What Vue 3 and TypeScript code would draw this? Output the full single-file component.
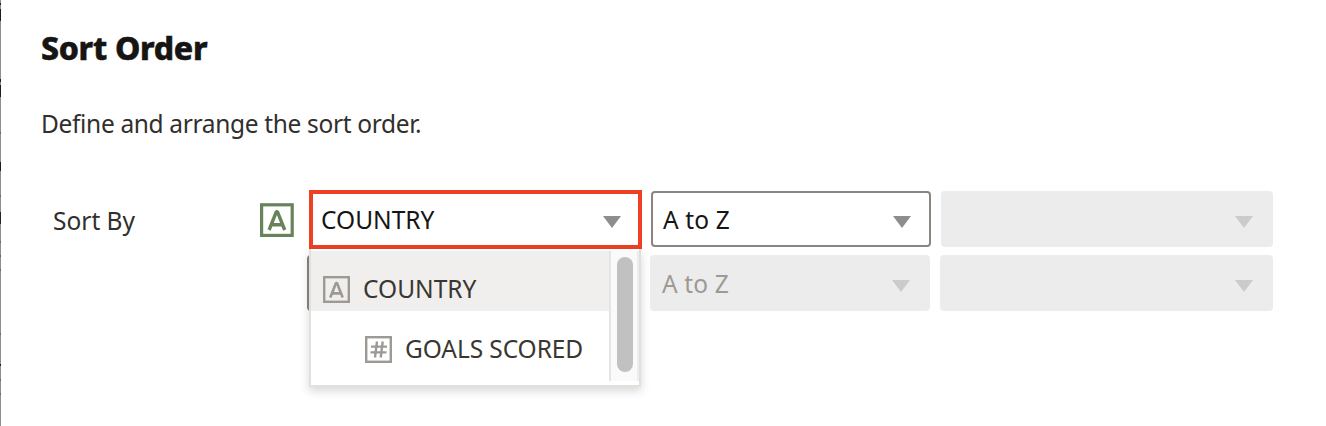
<script setup lang="ts">
interface Option { label: string; kind: 'text' | 'number' }
const options: Option[] = [
  { label: 'COUNTRY', kind: 'text' },
  { label: 'GOALS SCORED', kind: 'number' },
]
</script>

<template>
  <main class="dialog">
    <h1><span>Sort Order</span></h1>
    <p class="intro">Define and arrange the sort order.</p>
    <section class="row first">
      <label class="label">Sort By</label>
      <svg class="type" viewBox="0 0 34 34">
        <rect x="1.6" y="1.8" width="30.6" height="30.6" fill="#fff" stroke="#68825a" stroke-width="3.2" />
        <path d="M9.1 27 16.4 8.7H17.4L24.7 27M12 21.7H22" fill="none" stroke="#68825a" stroke-width="3.4" stroke-linejoin="bevel" />
      </svg>
      <div class="column">
        <span class="value country">COUNTRY</span>
        <svg class="arrow" viewBox="0 0 18 12"><path d="M0 0H18L9 12Z" /></svg>
        <div class="popup">
          <ul>
            <li v-for="(option, i) in options" :key="option.label" :class="{ active: i === 0, child: i === 1 }">
              <svg class="small" viewBox="0 0 27 27">
                <rect x="1.2" y="1.2" width="24.6" height="24.6" fill="none" stroke="#9d9994" stroke-width="2.4" />
                <path v-if="option.kind === 'text'" d="M7.3 21.5 13 7H14L19.7 21.5M9.4 17.4H17.6" fill="none" stroke="#9d9994" stroke-width="2.6" stroke-linejoin="bevel" />
                <path v-else d="M12 5.5 10 21.5M17.7 5.5 15.7 21.5M6 10.6H22M5.5 16.4H21.5" fill="none" stroke="#9d9994" stroke-width="2.4" />
              </svg>
              <span :class="option.kind">{{ option.label }}</span>
            </li>
          </ul>
          <div class="track"><div class="thumb"></div></div>
        </div>
      </div>
      <div class="select order"><span class="value atoz">A to Z</span><svg class="arrow" viewBox="0 0 18 12"><path d="M0 0H18L9 12Z" /></svg></div>
      <div class="select disabled end"><svg class="arrow" viewBox="0 0 18 12"><path d="M0 0H18L9 12Z" /></svg></div>
    </section>
    <section class="row second">
      <div class="select covered"></div>
      <div class="select order disabled"><span class="value atoz">A to Z</span><svg class="arrow" viewBox="0 0 18 12"><path d="M0 0H18L9 12Z" /></svg></div>
      <div class="select disabled end"><svg class="arrow" viewBox="0 0 18 12"><path d="M0 0H18L9 12Z" /></svg></div>
    </section>
  </main>
</template>

<style scoped>
* { box-sizing: border-box; }
.dialog {
  width: 1326px; height: 426px; overflow: hidden; padding-top: 28px;
  font-family: "Noto Sans", sans-serif; font-size: 24.5px; line-height: 40px; color: #312f2d;
  background:
    linear-gradient(#8e8e8e 0 3px, #222 3px 5px, #8e8e8e 5px 9px, #1c1c1c 9px 21px, #8e8e8e 21px 79px, #222 79px 82px, #8e8e8e 82px 85px, #1c1c1c 85px 97px, #8e8e8e 97px 132px, #666 132px 134px, #8e8e8e 134px 162px, #1c1c1c 162px 171px, #8e8e8e 171px 195px, #666 195px 197px, #8e8e8e 197px 212px, #222 212px 224px, #8e8e8e 224px 241px, #666 241px 243px, #8e8e8e 243px 255px, #666 255px 257px, #8e8e8e 257px 269px, #666 269px 271px, #8e8e8e 271px 333px, #666 333px 335px, #8e8e8e 335px 364px, #222 364px 366px, #8e8e8e 366px 379px, #666 379px 381px, #8e8e8e 381px 393px, #666 393px 395px, #8e8e8e 395px) 0 0 / 1px 426px no-repeat, #fff;
}
h1 { margin: 0 0 0 41px; height: 40px; font-size: 32px; line-height: 40px; font-weight: 800; letter-spacing: -.3px; color: #161513; -webkit-text-stroke: .5px #161513; }
.intro { margin: 36px 0 0 41px; height: 40px; font-size: 24.5px; letter-spacing: -.34px; white-space: nowrap; }
.row { display: flex; white-space: nowrap; }
.first { margin-top: 46px; height: 59px; padding-left: 53px; }
.label { width: 207px; margin-top: 11px; }
.type { width: 34px; height: 34px; margin-top: 13px; flex: none; }
.column { position: relative; width: 333px; height: 59px; margin-left: 15px; border: 4px solid #ee4023; display: flex; align-items: center; padding: 0 17px 0 8px; color: #161513; }
.value { height: 40px; line-height: 40px; }
.country { margin-top: 1px; }
.atoz { margin-top: 2px; letter-spacing: .15px; }
.arrow { width: 18px; height: 12px; margin: 4px 0 0 auto; fill: #8b8d8f; }
.select { height: 56px; border-radius: 4px; display: flex; align-items: center; padding-left: 10px; color: #161513; }
.order { width: 280px; border: 2px solid #8a8580; padding-right: 18px; }
.first .order { margin: 1px 0 0 9px; }
.disabled { background: #ececec; border-color: #ececec; color: #9d9994; }
.disabled .arrow { fill: #c9cbcd; margin-top: 6px; }
.order.disabled .arrow { margin-top: 5px; }
.order .arrow { margin-top: 5px; }
.end { width: 332px; margin: 1px 0 0 10px; padding-right: 20px; }
.second { margin-top: 6px; padding-left: 307px; }
.covered { width: 333px; border: 2px solid #8a8580; }
.second .order { margin-left: 10px; }
.second .end { width: 333px; margin-top: 0; }
.popup { position: absolute; left: -4px; top: 55px; width: 332px; height: 138px; border: 2px solid #e1e1dc; border-top: 0; background: #fff; box-shadow: 0 4px 9px rgba(0,0,0,.16); display: flex; padding-top: 2px; z-index: 2; }
ul { list-style: none; padding: 0; margin: 0; width: 298px; }
li { display: flex; align-items: center; height: 60px; padding: 16px 0 0 12px; color: #3a3631; }
li.active { background: #f0efed; }
li.child { padding: 16px 0 0 54px; }
li .number { letter-spacing: -.08px; }
.small { width: 27px; height: 27px; margin-right: 13px; flex: none; }
.track { width: 30px; height: 130px; border-left: 2px solid #e5e5e5; border-right: 2px solid #ededed; background: #fafafa; padding: 6px 0 0 6px; }
.thumb { width: 16px; height: 115px; border-radius: 8px; background: #c1c1c1; }
</style>

<style>
body { margin: 0; background: #fff; }
</style>
